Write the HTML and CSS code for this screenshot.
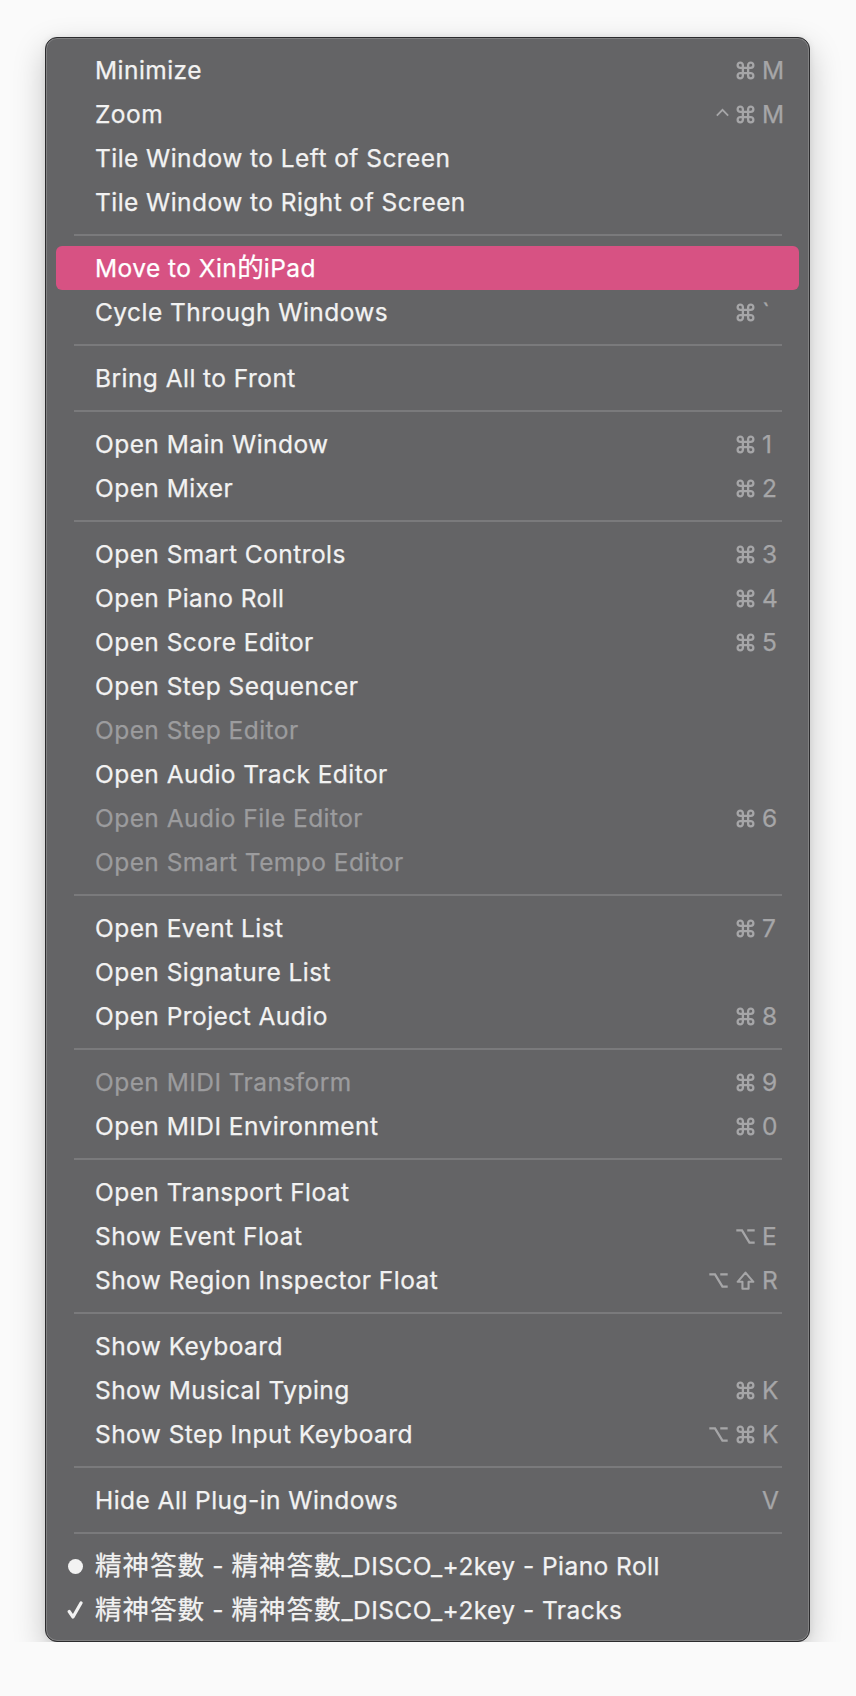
FILE: index.html
```html
<!DOCTYPE html>
<html lang="en">
<head>
<meta charset="utf-8">
<title>Window Menu</title>
<link rel="stylesheet" href="styles.css">
</head>
<body>
<svg class="defs" width="0" height="0" aria-hidden="true">
  <defs>
    <symbol id="cmd" viewBox="0 0 24 24"><path d="M15 6v12a3 3 0 1 0 3-3H6a3 3 0 1 0 3 3V6a3 3 0 1 0-3 3h12a3 3 0 1 0-3-3" fill="none" stroke="currentColor" stroke-width="2.6" stroke-linejoin="round"/></symbol>
    <symbol id="opt" viewBox="0 0 24 24"><path d="M1.5 5h6.5l8.5 14h6 M14 5h8.5" fill="none" stroke="currentColor" stroke-width="2.6" stroke-linejoin="miter"/></symbol>
    <symbol id="shift" viewBox="0 0 24 24"><path d="M8.5 21.5v-8h-5.5l9-10.5 9 10.5h-5.5v8z" fill="none" stroke="currentColor" stroke-width="2.4" stroke-linejoin="round"/></symbol>
    <symbol id="ctrl" viewBox="0 0 24 24"><path d="M4 13.5 L12 5.5 L20 13.5" fill="none" stroke="currentColor" stroke-width="2.6" stroke-linejoin="miter"/></symbol>
  </defs>
</svg>
<div class="menu">
  <div class="item"><span class="label">Minimize</span><span class="sc"><svg class="mod"><use href="#cmd"/></svg><span class="key">M</span></span></div>
  <div class="item"><span class="label">Zoom</span><span class="sc"><svg class="mod ctrl"><use href="#ctrl"/></svg><svg class="mod"><use href="#cmd"/></svg><span class="key">M</span></span></div>
  <div class="item"><span class="label">Tile Window to Left of Screen</span></div>
  <div class="item"><span class="label">Tile Window to Right of Screen</span></div>
  <div class="sep"></div>
  <div class="item active"><span class="label">Move to Xin<span class="cjk">的</span>iPad</span></div>
  <div class="item"><span class="label">Cycle Through Windows</span><span class="sc"><svg class="mod"><use href="#cmd"/></svg><span class="key">`</span></span></div>
  <div class="sep"></div>
  <div class="item"><span class="label">Bring All to Front</span></div>
  <div class="sep"></div>
  <div class="item"><span class="label">Open Main Window</span><span class="sc"><svg class="mod"><use href="#cmd"/></svg><span class="key">1</span></span></div>
  <div class="item"><span class="label">Open Mixer</span><span class="sc"><svg class="mod"><use href="#cmd"/></svg><span class="key">2</span></span></div>
  <div class="sep"></div>
  <div class="item"><span class="label">Open Smart Controls</span><span class="sc"><svg class="mod"><use href="#cmd"/></svg><span class="key">3</span></span></div>
  <div class="item"><span class="label">Open Piano Roll</span><span class="sc"><svg class="mod"><use href="#cmd"/></svg><span class="key">4</span></span></div>
  <div class="item"><span class="label">Open Score Editor</span><span class="sc"><svg class="mod"><use href="#cmd"/></svg><span class="key">5</span></span></div>
  <div class="item"><span class="label">Open Step Sequencer</span></div>
  <div class="item disabled"><span class="label">Open Step Editor</span></div>
  <div class="item"><span class="label">Open Audio Track Editor</span></div>
  <div class="item disabled"><span class="label">Open Audio File Editor</span><span class="sc"><svg class="mod"><use href="#cmd"/></svg><span class="key">6</span></span></div>
  <div class="item disabled"><span class="label">Open Smart Tempo Editor</span></div>
  <div class="sep"></div>
  <div class="item"><span class="label">Open Event List</span><span class="sc"><svg class="mod"><use href="#cmd"/></svg><span class="key">7</span></span></div>
  <div class="item"><span class="label">Open Signature List</span></div>
  <div class="item"><span class="label">Open Project Audio</span><span class="sc"><svg class="mod"><use href="#cmd"/></svg><span class="key">8</span></span></div>
  <div class="sep"></div>
  <div class="item disabled"><span class="label">Open MIDI Transform</span><span class="sc"><svg class="mod"><use href="#cmd"/></svg><span class="key">9</span></span></div>
  <div class="item"><span class="label">Open MIDI Environment</span><span class="sc"><svg class="mod"><use href="#cmd"/></svg><span class="key">0</span></span></div>
  <div class="sep"></div>
  <div class="item"><span class="label">Open Transport Float</span></div>
  <div class="item"><span class="label">Show Event Float</span><span class="sc"><svg class="mod"><use href="#opt"/></svg><span class="key">E</span></span></div>
  <div class="item"><span class="label">Show Region Inspector Float</span><span class="sc"><svg class="mod"><use href="#opt"/></svg><svg class="mod"><use href="#shift"/></svg><span class="key">R</span></span></div>
  <div class="sep"></div>
  <div class="item"><span class="label">Show Keyboard</span></div>
  <div class="item"><span class="label">Show Musical Typing</span><span class="sc"><svg class="mod"><use href="#cmd"/></svg><span class="key">K</span></span></div>
  <div class="item"><span class="label">Show Step Input Keyboard</span><span class="sc"><svg class="mod"><use href="#opt"/></svg><svg class="mod"><use href="#cmd"/></svg><span class="key">K</span></span></div>
  <div class="sep"></div>
  <div class="item"><span class="label">Hide All Plug-in Windows</span><span class="sc"><span class="key">V</span></span></div>
  <div class="sep"></div>
  <div class="item"><span class="mark"><span class="dot"></span></span><span class="label"><span class="cjk wide">精神答數</span> - <span class="cjk wide">精神答數</span>_DISCO_+2key - Piano Roll</span></div>
  <div class="item"><span class="mark"><svg class="check" viewBox="0 0 16 18" width="16" height="18"><path d="M2.2 10.5 L6 16 L14 2" fill="none" stroke="#f2f2f2" stroke-width="3.2" stroke-linecap="round" stroke-linejoin="round"/></svg></span><span class="label"><span class="cjk wide">精神答數</span> - <span class="cjk wide">精神答數</span>_DISCO_+2key - Tracks</span></div>
</div>
</body>
</html>
```

FILE: styles.css
```css
html, body {
  margin: 0;
  padding: 0;
  background: #fafafa;
}

body {
  padding: 37px 0 0 45px;
  font-family: Inter, "Noto Sans CJK TC", sans-serif;
}

.defs {
  position: absolute;
  width: 0;
  height: 0;
  overflow: hidden;
}

.menu {
  width: 763px;
  box-sizing: content-box;
  padding: 10px 0 9px;
  background: #646466;
  border: 1px solid #2c2c2e;
  border-radius: 12px;
  box-shadow: inset 0 0 0 1px rgba(255, 255, 255, 0.18), 0 12px 32px rgba(0, 0, 0, 0.22), 0 0 6px rgba(0, 0, 0, 0.08);
}

.item {
  position: relative;
  display: flex;
  align-items: center;
  height: 44px;
  margin: 0 10px;
  padding: 0 17px 0 39px;
  border-radius: 6px;
  color: #f2f2f2;
  font-size: 24.5px;
  font-weight: 400;
  letter-spacing: 0.45px;
  -webkit-text-stroke: 0.25px currentColor;
}

.item.active {
  background: #d75283;
  color: #ffffff;
}

.item.disabled {
  color: #9c9c9e;
}

.label {
  flex: 1;
  white-space: nowrap;
  line-height: 44px;
}

.cjk {
  font-family: "Noto Sans CJK TC", sans-serif;
  font-size: 26.5px;
  font-weight: 400;
  letter-spacing: 0;
  line-height: 1;
}

.cjk.wide {
  letter-spacing: 1px;
}

.sc {
  display: flex;
  align-items: center;
  color: #a6a6a8;
}

.mod {
  width: 21px;
  height: 21px;
  margin-right: 6px;
  flex: none;
}

.mod.ctrl {
  width: 17px;
  margin-right: 4px;
}

.key {
  width: 20px;
  text-align: left;
  letter-spacing: 0;
}

.sep {
  height: 22px;
  display: flex;
  align-items: center;
  padding: 0 27px 0 28px;
}

.sep::before {
  content: "";
  flex: 1;
  height: 2px;
  background: #7a7a7c;
}

.mark {
  position: absolute;
  left: 10px;
  top: 0;
  width: 18px;
  height: 44px;
  display: flex;
  align-items: center;
  justify-content: center;
}

.dot {
  width: 15px;
  height: 15px;
  border-radius: 50%;
  background: #f2f2f2;
}
```
